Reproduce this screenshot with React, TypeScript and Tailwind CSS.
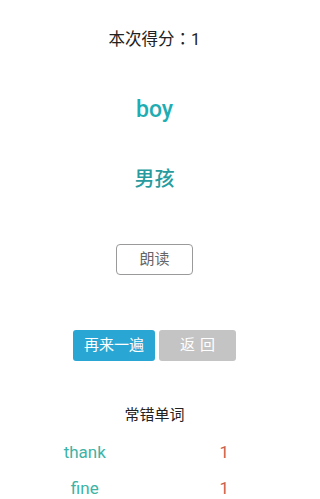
import React from 'react';

const font = { fontFamily: "Roboto, 'Noto Sans CJK SC', sans-serif" };

const wrongWords = [
  { word: 'thank', count: 1 },
  { word: 'fine', count: 1 },
];

export default function App() {
  return (
    <div className="w-[309px] h-[499px] overflow-hidden bg-white flex flex-col" style={font}>
      <div className="h-[2px] bg-[#5f5f5f]" />
      <div className="h-[4px] bg-gradient-to-b from-[#d8d8d8] to-white" />

      <div className="flex flex-col items-center">
        <div className="mt-[26px] h-[24px] leading-[24px] text-[16.5px] text-[#222]">
          本次得分<span style={{ fontFamily: "'Noto Sans CJK TC', sans-serif" }}>：</span>1
        </div>

        <div className="mt-[44px] h-[32px] leading-[32px] text-[23px] font-medium text-[#1eadb2]">boy</div>

        <div className="mt-[38px] h-[30px] leading-[30px] text-[20px] font-medium text-[#279b9e]">男孩</div>

        <button className="mt-[50px] w-[77px] h-[31px] rounded-[4px] border border-[#9a9a9a] text-[15px] text-[#666] bg-white">
          朗读
        </button>

        <div className="mt-[55px] flex gap-[4px]">
          <button className="w-[82px] h-[31px] rounded-[3px] bg-[#29a6d3] text-white text-[15px]">再来一遍</button>
          <button className="w-[77px] h-[31px] rounded-[3px] bg-[#c4c4c4] text-white text-[15px] tracking-[5px] pl-[5px]">返回</button>
        </div>

        <div className="mt-[42px] h-[24px] leading-[24px] text-[15px] text-[#222]">常错单词</div>
      </div>

      <div className="mt-[8px] px-[15px] flex flex-col">
        {wrongWords.map((w) => (
          <div key={w.word} className="flex h-[36px] items-center text-[17px]">
            <span className="flex-1 text-center text-[#3db3a6]">{w.word}</span>
            <span className="flex-1 text-center text-[#c8604f]">{w.count}</span>
          </div>
        ))}
      </div>
    </div>
  );
}
